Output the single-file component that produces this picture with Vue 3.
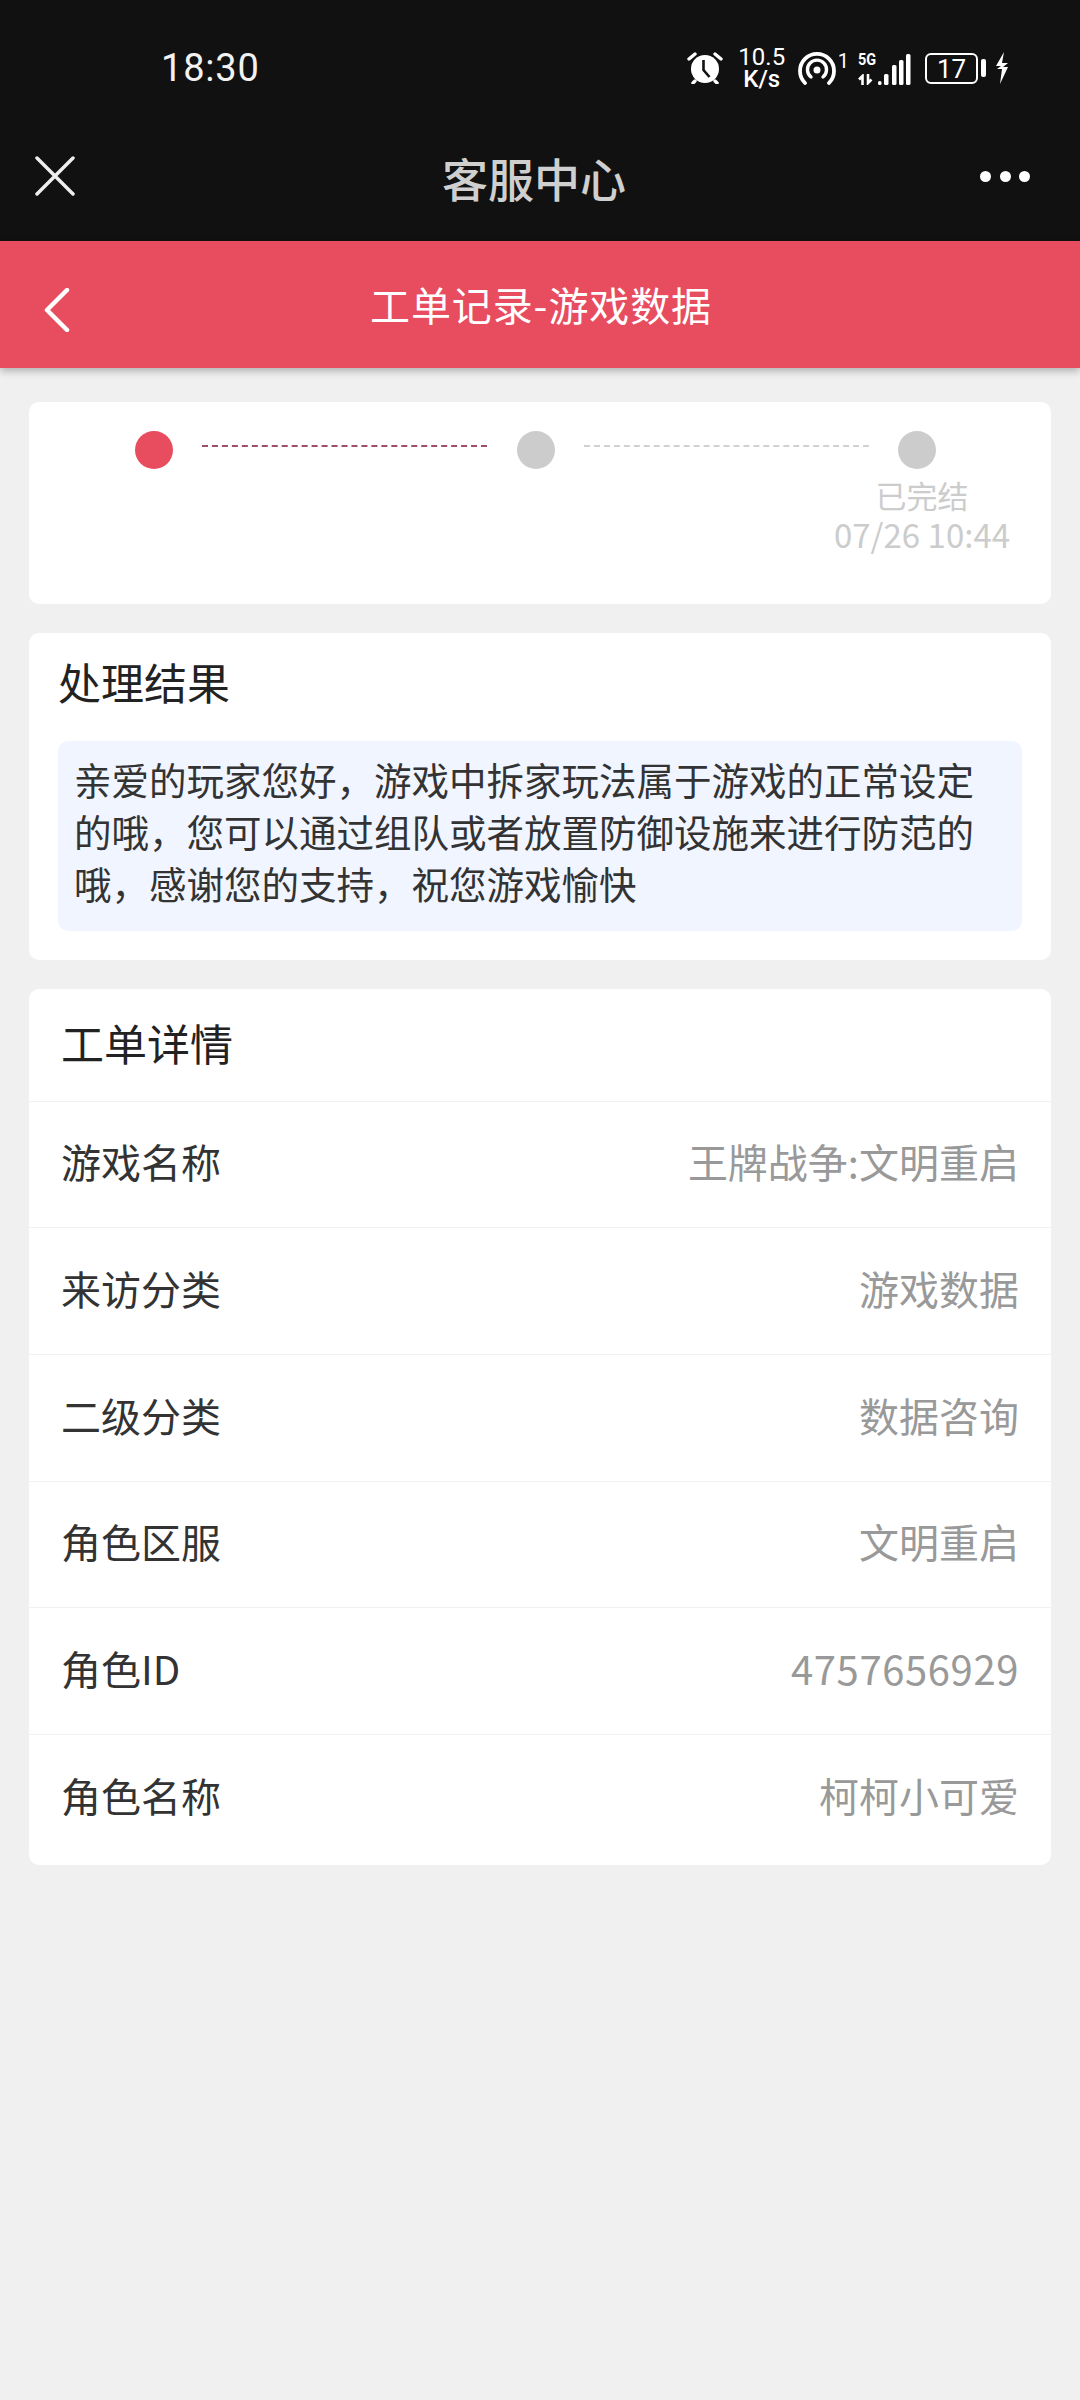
<script setup>
const rows = [
  { label: '游戏名称', value: '王牌战争:文明重启' },
  { label: '来访分类', value: '游戏数据' },
  { label: '二级分类', value: '数据咨询' },
  { label: '角色区服', value: '文明重启' },
  { label: '角色ID', value: '4757656929', spaced: true },
  { label: '角色名称', value: '柯柯小可爱' }
]
const signalBars = [
  { x: 20, w: 3.5, h: 4 },
  { x: 26, w: 4.5, h: 11 },
  { x: 34, w: 4.5, h: 20 },
  { x: 41, w: 4.5, h: 25 },
  { x: 48, w: 4.5, h: 31 }
]
</script>

<template>
  <div class="page">
    <div class="top">
      <div class="status">
        <span class="time">18:30</span>
        <div class="status-icons">
          <svg class="alarm" width="36" height="32" viewBox="0 0 36 32">
            <circle cx="18" cy="17" r="14" fill="#fff" />
            <path d="M2 7 8 2M34 7 28 2M8 29l-2 2M28 29l2 2" stroke="#fff" stroke-width="3.400" stroke-linecap="round" />
            <path d="M16.500 8v10l6 7" fill="none" stroke="#111" stroke-width="2.600" />
          </svg>
          <div class="speed"><span>10.5</span><span class="speed-unit">K/s</span></div>
          <div class="hotspot">
            <svg width="38" height="33" viewBox="0 0 38 33">
              <path d="M7 31A17 17 0 1 1 31 31" fill="none" stroke="#fff" stroke-width="3.800" stroke-linecap="round" />
              <path d="M13 25A9.500 9.500 0 1 1 25 25" fill="none" stroke="#fff" stroke-width="3.400" stroke-linecap="round" />
              <circle cx="19" cy="18" r="3.500" fill="#fff" />
            </svg>
            <span class="hotspot-num">1</span>
          </div>
          <div class="signal">
            <span class="five-g">5G</span>
            <svg class="arrows" width="15" height="11" viewBox="0 0 15 11">
              <path d="M4.500 11V2L1 5.500M10 0v9l3.500-3.500" fill="none" stroke="#fff" stroke-width="2.600" />
            </svg>
            <svg class="bars" width="53" height="31" viewBox="0 0 53 31">
              <rect v-for="bar in signalBars" :key="bar.x" :x="bar.x" :y="31 - bar.h" :width="bar.w" :height="bar.h" rx="1.500" fill="#fff" />
            </svg>
          </div>
          <div class="battery">
            <div class="battery-body">17</div>
            <div class="battery-tip"></div>
          </div>
          <svg class="bolt" width="14" height="32" viewBox="0 0 14 32">
            <path d="M9 0 1 14h5L2 17h5L5 32l8-17H8l5-4H7z" fill="#fff" />
          </svg>
        </div>
      </div>
      <div class="nav">
        <svg class="close" width="40" height="40" viewBox="0 0 40 40">
          <path d="M2 2 38 38M38 2 2 38" stroke="#eee" stroke-width="3.500" stroke-linecap="round" />
        </svg>
        <span class="nav-title">客服中心</span>
        <div class="more"><i></i><i></i><i></i></div>
      </div>
    </div>

    <div class="bar">
      <svg class="back" width="26" height="44" viewBox="0 0 26 44">
        <path d="M23 2 3 22l20 20" fill="none" stroke="#fff" stroke-width="4.500" stroke-linecap="round" stroke-linejoin="round" />
      </svg>
      <span class="bar-title">工单记录-游戏数据</span>
    </div>

    <div class="content">
      <section class="card steps">
        <div class="track">
          <div class="dot active"></div>
          <div class="dash active"></div>
          <div class="dot"></div>
          <div class="dash"></div>
          <div class="dot"></div>
        </div>
        <div class="step-label">
          <div class="step-name">已完结</div>
          <div class="step-date">07/26 10:44</div>
        </div>
      </section>

      <section class="card result">
        <h2 class="card-title">处理结果</h2>
        <p class="result-text">亲爱的玩家您好，游戏中拆家玩法属于游戏的正常设定的哦，您可以通过组队或者放置防御设施来进行防范的哦，感谢您的支持，祝您游戏愉快</p>
      </section>

      <section class="card detail">
        <h2 class="detail-title">工单详情</h2>
        <div class="row" v-for="row in rows" :key="row.label">
          <span class="row-label">{{ row.label }}</span>
          <span :class="['row-value', { spaced: row.spaced }]">{{ row.value }}</span>
        </div>
      </section>
    </div>
  </div>
</template>

<style>
html,
body {
  margin: 0;
  background: #f0f0f0;
}
</style>

<style scoped>
.page {
  width: 1080px;
  height: 2400px;
  overflow: hidden;
  background: #f0f0f0;
  font-family: "Noto Sans CJK SC", "Noto Sans", sans-serif;
}

.top {
  background: #111;
  height: 241px;
}

.status {
  height: 136px;
  display: flex;
  align-items: center;
  justify-content: space-between;
  padding: 0 71px 0 161px;
  box-sizing: border-box;
}

.time {
  font-family: Roboto, sans-serif;
  font-size: 38px;
  color: #f2f2f2;
  letter-spacing: 0.8px;
}

.status-icons {
  display: flex;
  align-items: center;
  color: #fff;
  font-family: Roboto, sans-serif;
}

.alarm {
  margin-right: 16px;
}

.speed {
  display: flex;
  flex-direction: column;
  align-items: center;
  width: 46px;
  font-size: 24px;
  line-height: 22px;
  margin-right: 13px;
}

.speed-unit {
  font-weight: 500;
}

.hotspot {
  display: flex;
  align-items: flex-start;
  margin-right: 9px;
}

.hotspot-num {
  font-size: 20px;
  line-height: 18px;
  margin-left: 2px;
}

.signal {
  position: relative;
  width: 53px;
  height: 33px;
  margin-right: 14px;
}

.five-g {
  position: absolute;
  left: 0;
  top: -1px;
  font-size: 17px;
  line-height: 17px;
  font-weight: 700;
  transform: scaleX(0.85);
  transform-origin: left;
}

.arrows {
  position: absolute;
  left: 0;
  bottom: 0;
}

.bars {
  position: absolute;
  right: 0;
  bottom: 0;
}

.battery {
  display: flex;
  align-items: center;
  margin-right: 9px;
}

.battery-body {
  width: 49px;
  height: 27px;
  border: 2.500px solid #fff;
  border-radius: 6px;
  font-size: 26px;
  line-height: 28px;
  text-align: center;
}

.battery-tip {
  width: 5px;
  height: 18px;
  margin-left: 3px;
  border-radius: 2px;
  background: #fff;
}

.nav {
  height: 105px;
  display: flex;
  align-items: center;
  justify-content: space-between;
  padding: 0 50px 0 35px;
  position: relative;
  margin-top: -12px;
}

.close {
  margin-top: -2px;
}

.nav-title {
  position: absolute;
  left: 442px;
  font-size: 46px;
  color: #cfcfcf;
  font-weight: 500;
}

.more {
  display: flex;
  gap: 8.500px;
}

.more i {
  width: 11px;
  height: 11px;
  border-radius: 50%;
  background: #fff;
}

.bar {
  height: 127px;
  background: #e84c5f;
  box-shadow: 0 3px 8px rgba(0, 0, 0, 0.28);
  display: flex;
  align-items: center;
  padding-left: 44px;
  position: relative;
}

.back {
  margin-top: 10px;
}

.bar-title {
  position: absolute;
  left: 370px;
  top: 37px;
  font-size: 40px;
  line-height: 52px;
  letter-spacing: 0.9px;
  color: #fff;
}

.content {
  padding: 34px 29px 0 29px;
  display: flex;
  flex-direction: column;
  gap: 29px;
}

.card {
  background: #fff;
  border-radius: 10px;
}

.steps {
  height: 202px;
  padding: 29px 39px 0 106px;
  box-sizing: border-box;
}

.track {
  display: flex;
  align-items: center;
}

.dot {
  width: 38px;
  height: 38px;
  flex: none;
  border-radius: 50%;
  background: #ccc;
}

.dot.active {
  background: #e84c5f;
}

.dash {
  width: 285px;
  margin: -9px 29px 0 29px;
  border-top: 2px dashed #d5d0d0;
}

.dash.active {
  margin-right: 30px;
  border-top-color: #a04e66;
}

.step-label {
  width: 180px;
  margin: 6px 0 0 auto;
  text-align: center;
  color: #ccc;
}

.step-name {
  font-size: 31px;
  line-height: 40px;
}

.step-date {
  font-size: 33px;
  line-height: 38px;
  white-space: nowrap;
}

.result {
  padding: 18px 29px 29px 29px;
}

.card-title {
  margin: 0;
  font-size: 43px;
  line-height: 60px;
  font-weight: 400;
  color: #222;
}

.result-text {
  margin: 30px 0 0;
  padding: 12px 16px 21.500px;
  background: #f0f5ff;
  border-radius: 10px;
  font-size: 37.500px;
  line-height: 52px;
  color: #333;
}

.detail {
  padding-bottom: 4px;
}

.detail-title {
  margin: 0;
  padding: 0 32px;
  height: 112px;
  font-size: 43px;
  line-height: 106px;
  font-weight: 400;
  color: #222;
}

.row {
  height: 126.700px;
  box-sizing: border-box;
  padding: 0 32px 6px;
  border-top: 1px solid #f2f2f2;
  display: flex;
  align-items: center;
  justify-content: space-between;
  font-size: 40px;
}

.row-label {
  color: #333;
}

.row-value {
  color: #999;
}

.row-value.spaced {
  letter-spacing: 0.6px;
}
</style>
